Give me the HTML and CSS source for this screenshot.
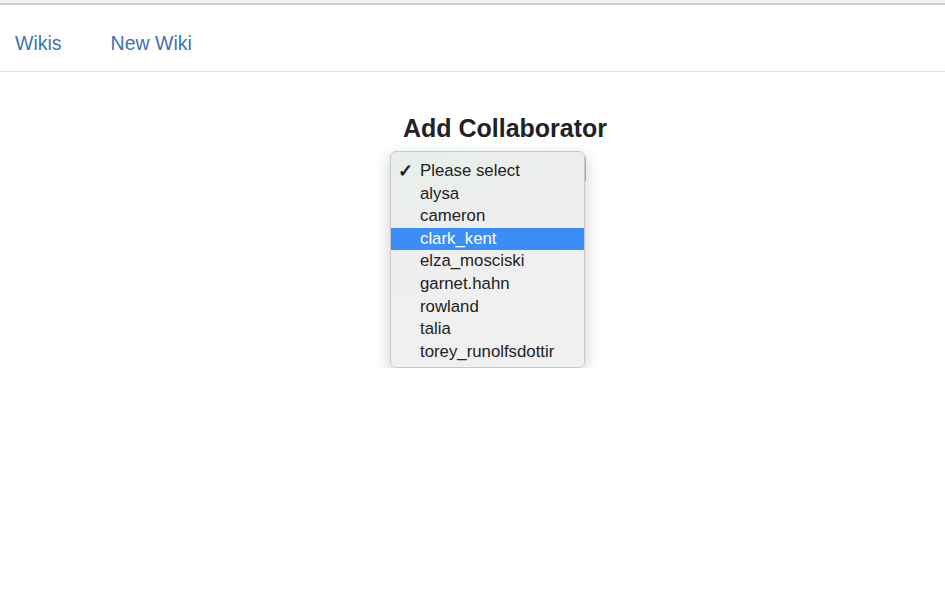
FILE: index.html
```html
<!DOCTYPE html>
<html>
<head>
<meta charset="utf-8">
<link rel="stylesheet" href="styles.css">
</head>
<body>
<div class="topbar"></div>
<nav class="nav">
  <a class="nav-link" href="#">Wikis</a>
  <a class="nav-link" href="#">New Wiki</a>
</nav>
<main class="main">
  <h1 class="title">Add Collaborator</h1>
  <div class="select-wrap">
    <div class="select-focus"></div>
    <ul class="menu">
      <li class="item"><span class="check">✓</span>Please select</li>
      <li class="item">alysa</li>
      <li class="item">cameron</li>
      <li class="item active">clark_kent</li>
      <li class="item">elza_mosciski</li>
      <li class="item">garnet.hahn</li>
      <li class="item">rowland</li>
      <li class="item">talia</li>
      <li class="item">torey_runolfsdottir</li>
    </ul>
  </div>
</main>
</body>
</html>
```
FILE: styles.css
```css
* { box-sizing: border-box; }
html, body { margin: 0; padding: 0; background: #fff; }
body { font-family: "Liberation Sans", Arial, sans-serif; color: #333; }

.topbar {
  height: 5px;
  background: #f2f2f2;
  border-bottom: 2px solid #cfcfcf;
}

.nav {
  height: 67px;
  border-bottom: 1px solid #dedede;
  display: flex;
  align-items: center;
  padding: 10px 0 0 15px;
  gap: 49px;
}
.nav-link {
  color: #3a73b5;
  text-decoration: none;
  font-size: 19.5px;
}

.main {
  display: flex;
  flex-direction: column;
  align-items: center;
  padding-left: 65px;
}
.title {
  margin: 41px 0 0 0;
  font-size: 25px;
  font-weight: bold;
  color: #222;
  line-height: 30px;
}

.select-wrap {
  position: relative;
  margin-top: 8px;
  margin-left: -35px;
  width: 195px;
}
.select-focus {
  position: absolute;
  right: -1px;
  top: 6px;
  width: 3px;
  height: 24px;
  background: #9dbce4;
}
.menu {
  position: relative;
  list-style: none;
  margin: 0;
  padding: 8px 0 4px 0;
  background: linear-gradient(160deg, #e7efe9 0%, #efefef 45%, #f0f0f0 100%);
  border: 1px solid #c8c8c8;
  border-radius: 6px;
  box-shadow: 0 5px 16px rgba(0,0,0,0.2);
  font-size: 16.8px;
  color: #222;
}
.item {
  height: 22.6px;
  line-height: 22.6px;
  padding-left: 29px;
  position: relative;
  white-space: nowrap;
}
.item.active {
  background: #3b8df8;
  color: #fff;
}
.check {
  position: absolute;
  left: 7px;
  top: 0;
  font-size: 18px;
  font-weight: bold;
  font-family: "DejaVu Sans", sans-serif;
  color: #111;
  -webkit-text-stroke: 0.6px #111;
}
```
